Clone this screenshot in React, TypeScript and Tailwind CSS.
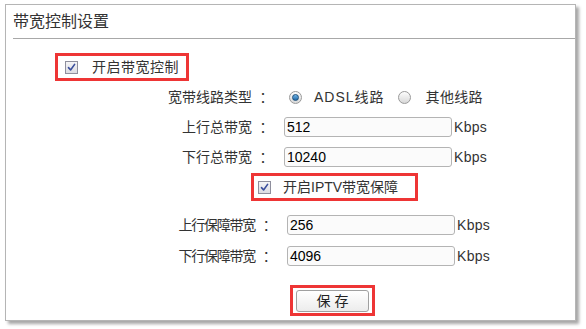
const FONT = "font-['Liberation_Sans','Noto_Sans_CJK_SC',sans-serif]";

function CheckBox() {
  return (
    <span className="flex h-[13px] w-[13px] shrink-0 items-center justify-center border border-[#8f8f9d] bg-gradient-to-b from-[#f4f4f6] to-[#dcdce2]">
      <svg width="9" height="9" viewBox="0 0 9 9" fill="none">
        <path d="M1.5 4.6 L3.6 7 L7.6 1.4" stroke="#3a4e9c" strokeWidth="1.6" strokeLinecap="round" strokeLinejoin="round" />
      </svg>
    </span>
  );
}

function Radio({ checked }: { checked?: boolean }) {
  return (
    <span className="flex h-[13px] w-[13px] shrink-0 items-center justify-center rounded-full border border-[#9a9a9a] bg-gradient-to-b from-[#fdfdfd] to-[#d8d8d8]">
      {checked && (
        <span className="h-[7px] w-[7px] rounded-full border border-[#1c4f7a] bg-gradient-to-b from-[#6fb3e6] to-[#1e6aa8]" />
      )}
    </span>
  );
}

// label text with a centred full-width colon, as in the router UI
function Label({ text, width, tight }: { text: string; width: string; tight?: boolean }) {
  return (
    <div className={`${width} flex justify-end ${tight ? 'tracking-[-1.2px]' : ''}`}>
      <span>{text}</span>
      <span className="ml-[4px] font-['Noto_Sans_CJK_TC',sans-serif]">：</span>
    </div>
  );
}

function InputRow({ label, value, tight }: { label: string; value: string; tight?: boolean }) {
  return (
    <div className="flex h-[20px] items-center">
      <Label text={label} width={tight ? 'w-[266px]' : 'w-[264px]'} tight={tight} />
      <div className={`${tight ? 'ml-[15px]' : 'ml-[14px]'} flex h-[20px] w-[168px] items-center rounded-[3px] border border-[#b4b4b4] bg-[#fbfbfb] pl-[2px] text-black`}>
        {value}
      </div>
      <span className="ml-[2px] tracking-[0.3px] text-[#333]">Kbps</span>
    </div>
  );
}

export default function App() {
  return (
    <div className={`h-[329px] w-[586px] bg-white pl-[5px] pt-[4px] text-[14px] leading-none text-[#333] ${FONT}`}>
      <div className="flex h-[317px] w-[571px] flex-col border border-[#b5b5b5] shadow-[3px_3px_3px_rgba(0,0,0,0.35)]">
        {/* Title */}
        <div className="flex h-[33px] items-center pl-[7px] text-[16px] text-[#333]">带宽控制设置</div>
        <div className="ml-[7px] h-px bg-[#a8a8a8]" />

        {/* Enable bandwidth control */}
        <div className="ml-[49px] mt-[14px] flex h-[28px] w-[134px] items-center border-[3px] border-[#ee3535] pl-[7px]">
          <CheckBox />
          <span className="ml-[14px] tracking-[0.5px]">开启带宽控制</span>
        </div>

        {/* Line type */}
        <div className="mt-[6px] flex h-[20px] items-center">
          <Label text="宽带线路类型" width="w-[264px]" />
          <span className="ml-[19px]"><Radio checked /></span>
          <span className="ml-[12px] tracking-[1px]">ADSL线路</span>
          <span className="ml-[13px]"><Radio /></span>
          <span className="ml-[15px] tracking-[0.3px]">其他线路</span>
        </div>

        <div className="mt-[10px]">
          <InputRow label="上行总带宽" value="512" />
        </div>
        <div className="mt-[10px]">
          <InputRow label="下行总带宽" value="10240" />
        </div>

        {/* IPTV */}
        <div className="ml-[245px] mt-[6px] flex h-[28px] w-[167px] items-center border-[3px] border-[#ee3535] pl-[4px]">
          <CheckBox />
          <span className="ml-[12px]">开启IPTV带宽保障</span>
        </div>

        <div className="mt-[14px]">
          <InputRow label="上行保障带宽" value="256" tight />
        </div>
        <div className="mt-[11px]">
          <InputRow label="下行保障带宽" value="4096" tight />
        </div>

        {/* Save */}
        <div className="ml-[284px] mt-[19px] flex h-[31px] w-[85px] items-center justify-center border-[3px] border-[#ee3535]">
          <button className="flex h-[22px] w-[73px] items-center justify-center rounded-[3px] border border-[#a0a0a0] bg-gradient-to-b from-white to-[#ececec] text-[14px] text-[#222]">
            保 存
          </button>
        </div>
      </div>
    </div>
  );
}
